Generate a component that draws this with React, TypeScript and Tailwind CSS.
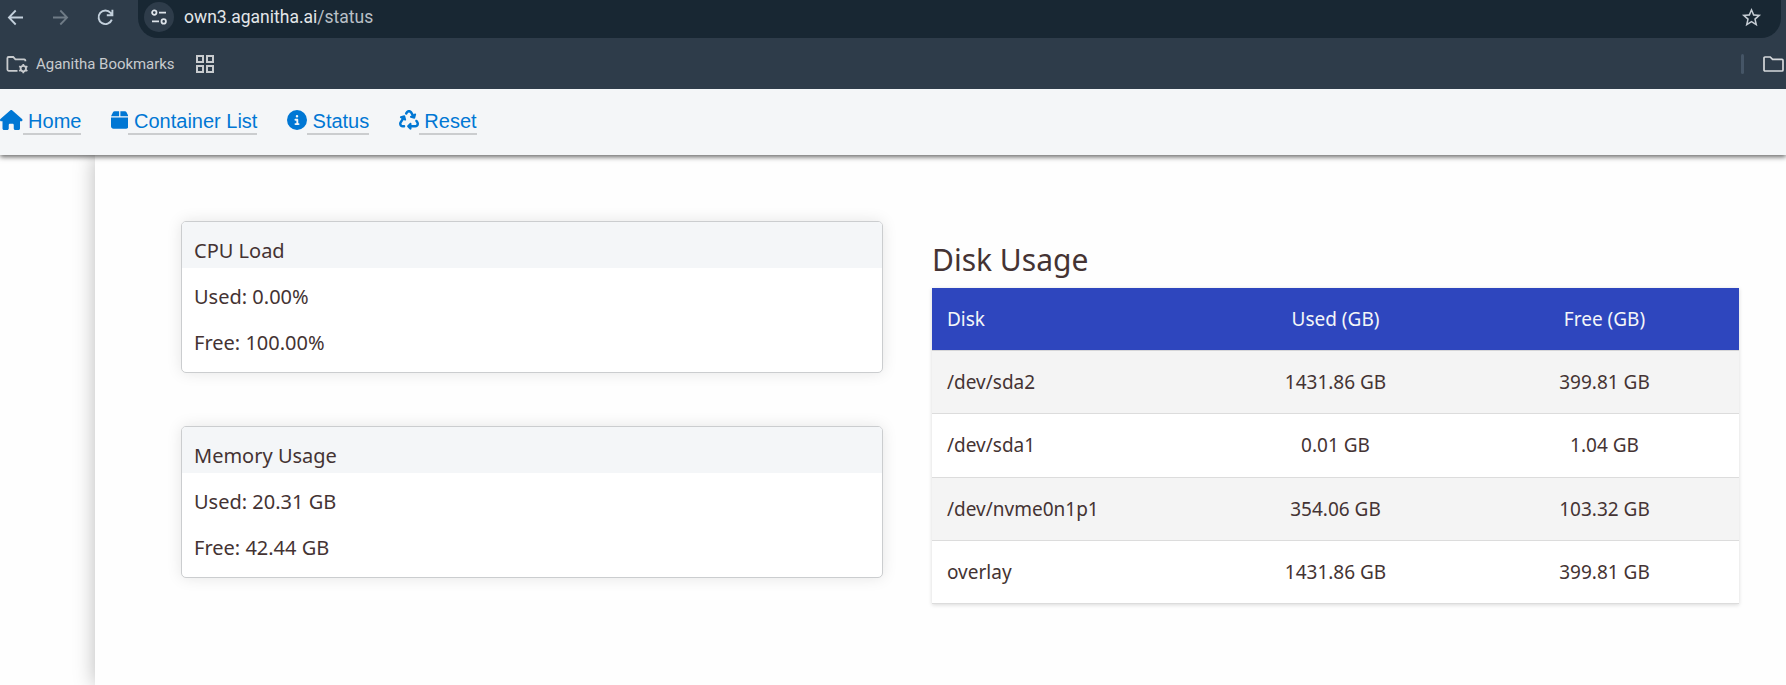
import { FaBox, FaCircleInfo, FaHouse, FaRecycle } from "react-icons/fa6";
import { MdStarBorder } from "react-icons/md";
import type { IconType } from "react-icons";

const navItems: { label: string; icon: IconType; size: string }[] = [
  { label: "Home", icon: FaHouse, size: "w-[22.5px]" },
  { label: "Container List", icon: FaBox, size: "w-[17.5px]" },
  { label: "Status", icon: FaCircleInfo, size: "w-[20px]" },
  { label: "Reset", icon: FaRecycle, size: "w-[20px]" },
];

const cards = [
  { title: "CPU Load", used: "0.00%", free: "100.00%" },
  { title: "Memory Usage", used: "20.31 GB", free: "42.44 GB" },
];

const disks = [
  { name: "/dev/sda2", used: "1431.86 GB", free: "399.81 GB" },
  { name: "/dev/sda1", used: "0.01 GB", free: "1.04 GB" },
  { name: "/dev/nvme0n1p1", used: "354.06 GB", free: "103.32 GB" },
  { name: "overlay", used: "1431.86 GB", free: "399.81 GB" },
];

function Toolbar() {
  return (
    <div className="flex h-[38px] items-start pl-[7px] pr-[5px]">
      <svg className="mt-[9px] h-[17px] w-[17px] shrink-0" viewBox="0 0 17 17" fill="none" stroke="#c3d0dc" strokeWidth="1.8">
        <path d="M16 8.5H2M8.7 1.5L1.9 8.5L8.7 15.5" />
      </svg>
      <svg className="ml-[28px] mt-[9px] h-[17px] w-[17px] shrink-0" viewBox="0 0 17 17" fill="none" stroke="#6f7b86" strokeWidth="1.8">
        <path d="M1 8.5H15M8.3 1.5L15.1 8.5L8.3 15.5" />
      </svg>
      <svg className="ml-[28px] mt-[9px] h-[17px] w-[17px] shrink-0" viewBox="0 0 17 17" fill="none" stroke="#c3d0dc" strokeWidth="1.9">
        <path d="M14.8 10.6A6.8 6.8 0 1 1 13.6 3.9L15.4 6M15.4 0.8V6.2H9.8" />
      </svg>
      <div className="ml-[24px] flex h-[37.5px] flex-1 items-start rounded-b-[20px] bg-[#182733] pl-[6px] pr-[18px]">
        <div className="mt-[2px] flex h-[30px] w-[30px] items-center justify-center rounded-full bg-[#2e3c4a]">
          <svg className="h-[16px] w-[16px]" viewBox="0 0 16 16" fill="none" stroke="#dde3e9" strokeWidth="1.8">
            <circle cx="3.3" cy="3.6" r="2.2" />
            <circle cx="12.7" cy="12.4" r="2.2" />
            <path d="M8 3.6H15M1 12.4H8" />
          </svg>
        </div>
        <div className="ml-[10px] mt-[5px] flex-1 text-[17.5px] leading-[24px] text-[#e3e6e9]">
          own3.aganitha.ai<span className="text-[#b9c0c7]">/status</span>
        </div>
        <MdStarBorder className="mt-[6px] h-[23px] w-[23px] text-[#c6cdd4]" />
      </div>
    </div>
  );
}

function BookmarksBar() {
  return (
    <div className="flex h-[51px] items-center pl-[6px] pt-px">
      <svg className="mt-[1px] h-[20px] w-[23px] shrink-0" viewBox="0 0 23 20" fill="none" stroke="#c8cbce" strokeWidth="1.8">
        <path d="M11.5 15.8H2.6Q1.4 15.8 1.4 14.6V3.2Q1.4 2 2.6 2H7.2L9.4 4.4H18.2Q19.4 4.4 19.4 6.2" />
        <circle cx="17.3" cy="13.6" r="2.7" />
        <path d="M17.3 10.8V8.9M17.3 18.3V16.4M19.7 12.2L21.4 11.2M14.9 15L13.2 16M19.7 15L21.4 16M14.9 12.2L13.2 11.2" />
      </svg>
      <div className="ml-[7px] text-[14.95px] leading-[20px] text-[#c8cbce]">Aganitha Bookmarks</div>
      <svg className="ml-[21px] h-[18px] w-[18px]" viewBox="0 0 18 18" fill="none" stroke="#c8cbce" strokeWidth="2">
        <path d="M1 1H7V7H1ZM11 1H17V7H11ZM1 11H7V17H1ZM11 11H17V17H11Z" />
      </svg>
      <div className="ml-auto h-[20px] w-[3px] rounded-full bg-[#455566]" />
      <svg className="ml-[19px] mr-[2px] h-[16px] w-[21px]" viewBox="0 0 21 16" fill="none" stroke="#d5d8db" strokeWidth="1.7">
        <path d="M1 2Q1 1 2 1H7.2L9.6 3.4H19Q20 3.4 20 4.4V14Q20 15 19 15H2Q1 15 1 14Z" />
      </svg>
    </div>
  );
}

function SiteNav() {
  return (
    <nav className="relative z-10 flex h-[66px] gap-[29.56px] bg-[#f4f6f8] pt-[21px] font-['Liberation_Sans',Arial,sans-serif] text-[20px] leading-[23px] text-[#0077d4] shadow-[0_2px_5px_rgba(0,0,0,0.6)] [clip-path:inset(0_0_-12px_0)]">
      {navItems.map(({ label, icon: Icon, size }) => (
        <a key={label} href="#" className="flex items-start">
          <Icon className={`h-[20px] ${size}`} />
          <span className="border-b-2 border-[#cbcdcf] whitespace-pre"> {label}</span>
        </a>
      ))}
    </nav>
  );
}

function StatCard({ title, used, free }: { title: string; used: string; free: string }) {
  return (
    <section className="overflow-hidden rounded-[5px] border border-[#cbcdcf] bg-white pb-[12px] text-[20px] leading-[35px] shadow-[0_0_15px_rgba(0,0,0,0.1)]">
      <h3 className="bg-[#f4f6f8] px-[12px] pt-[11px]">{title}</h3>
      <p className="px-[12px] pt-[11px]">Used: {used}</p>
      <p className="px-[12px] pt-[11px]">Free: {free}</p>
    </section>
  );
}

function DiskTable() {
  return (
    <table className="w-full table-fixed border-separate border-spacing-0 text-[19px] leading-[26px] shadow-[0_1px_4px_rgba(0,0,0,0.15)]">
      <thead>
        <tr className="bg-[#2e46be] text-[#f4f6f8]">
          <th className="h-[63px] border-b border-[#d6d6d8] px-[15px] py-0 text-left font-normal">Disk</th>
          <th className="border-b border-[#d6d6d8] px-[15px] py-0 text-center font-normal">Used (GB)</th>
          <th className="border-b border-[#d6d6d8] px-[15px] py-0 text-center font-normal">Free (GB)</th>
        </tr>
      </thead>
      <tbody>
        {disks.map((d) => (
          <tr key={d.name} className="bg-white odd:bg-[#f4f4f4]">
            <td className="h-[63.25px] border-b border-[#dcdcdc] px-[15px] py-0">{d.name}</td>
            <td className="border-b border-[#dcdcdc] px-[15px] py-0 text-center">{d.used}</td>
            <td className="border-b border-[#dcdcdc] px-[15px] py-0 text-center">{d.free}</td>
          </tr>
        ))}
      </tbody>
    </table>
  );
}

export default function App() {
  return (
    <div className="flex h-[685px] w-full flex-col overflow-hidden bg-[#fefefe]">
      <header className="h-[89px] shrink-0 bg-[#2e3c4a] font-[Roboto,sans-serif]">
        <Toolbar />
        <BookmarksBar />
      </header>
      <SiteNav />
      <main className="ml-[95px] flex flex-1 bg-[#fefefe] pl-[86px] font-['Noto_Sans',sans-serif] text-[#443333] shadow-[0_0_20px_rgba(0,0,0,0.27)]">
        <div className="flex w-[702px] flex-col gap-[53px] pt-[66px]">
          {cards.map((c) => (
            <StatCard key={c.title} {...c} />
          ))}
        </div>
        <div className="ml-[49px] w-[807px] pt-[84px]">
          <h2 className="h-[49px] text-[30px] leading-[41px]">Disk Usage</h2>
          <DiskTable />
        </div>
      </main>
    </div>
  );
}
